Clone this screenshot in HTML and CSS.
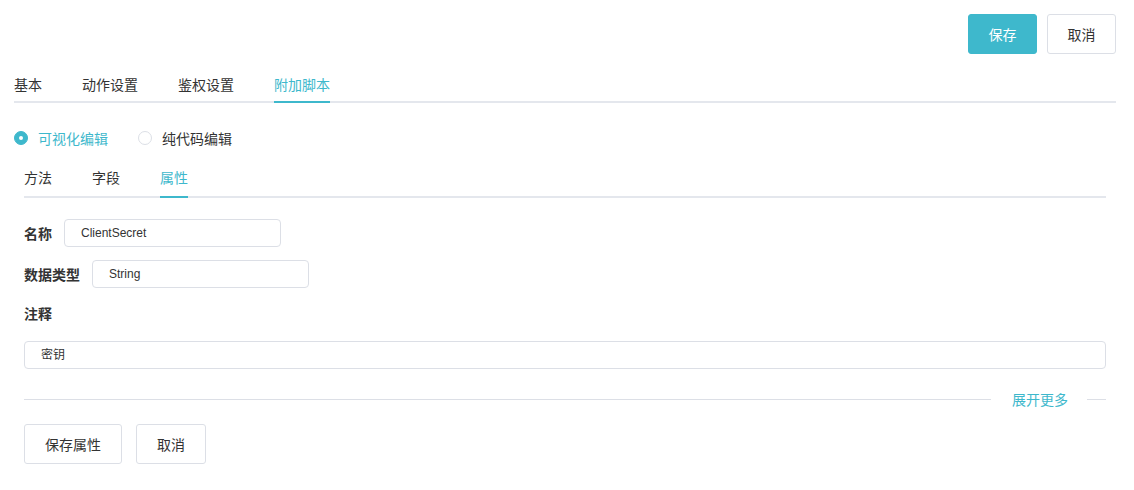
FILE: index.html
```html
<!DOCTYPE html>
<html lang="zh">
<head>
<meta charset="utf-8">
<link rel="stylesheet" href="styles.css">
</head>
<body>
<div class="page">
  <div class="topbar">
    <button class="btn btn-primary">保存</button>
    <button class="btn">取消</button>
  </div>
  <div class="tabs">
    <div class="tab">基本</div>
    <div class="tab">动作设置</div>
    <div class="tab">鉴权设置</div>
    <div class="tab active">附加脚本</div>
  </div>
  <div class="content">
    <div class="radios">
      <label class="radio checked"><span class="dot"></span>可视化编辑</label>
      <label class="radio"><span class="dot"></span>纯代码编辑</label>
    </div>
    <div class="subtabs">
      <div class="subtab">方法</div>
      <div class="subtab">字段</div>
      <div class="subtab active">属性</div>
    </div>
    <div class="row r1">
      <span class="label">名称</span>
      <div class="input">ClientSecret</div>
    </div>
    <div class="row r2">
      <span class="label">数据类型</span>
      <div class="input">String</div>
    </div>
    <div class="label block">注释</div>
    <div class="input wide">密钥</div>
    <div class="divider">
      <span class="line"></span>
      <span class="more">展开更多</span>
      <span class="line short"></span>
    </div>
    <div class="actions">
      <button class="btn btn-lg">保存属性</button>
      <button class="btn">取消</button>
    </div>
  </div>
</div>
</body>
</html>
```
FILE: styles.css
```css
* { box-sizing: border-box; }
body {
  margin: 0;
  font-family: "Noto Sans CJK SC", "Liberation Sans", sans-serif;
  color: #333;
  background: #fff;
}
.page { padding: 14px 18px 0 14px; }
.topbar { display: flex; justify-content: flex-end; gap: 10px; }
.btn {
  height: 40px;
  width: 70px;
  border: 1px solid #dcdfe6;
  border-radius: 3px;
  background: #fff;
  color: #333;
  font-family: inherit;
  font-size: 14px;
  padding: 0;
}
.topbar .btn { width: 69px; }
.btn-primary { background: #3eb8cc; border-color: #3eb8cc; color: #fff; }
.btn-lg { width: 98px; }
.tabs {
  display: flex;
  gap: 40px;
  margin-top: 20px;
  border-bottom: 2px solid #e4e7ed;
}
.tab {
  font-size: 14px;
  line-height: 20px;
  padding: 0 0 7px;
  margin-bottom: -2px;
  border-bottom: 2px solid transparent;
}
.tab.active { color: #3eb8cc; border-bottom-color: #3eb8cc; }
.content { padding: 0 10px 0 10px; }
.radios {
  display: flex;
  gap: 30px;
  margin: 25px 0 0 -10px;
}
.radio {
  display: flex;
  align-items: center;
  gap: 10px;
  font-size: 14px;
  line-height: 20px;
}
.dot {
  width: 14px; height: 14px;
  border: 1px solid #dcdfe6;
  border-radius: 50%;
  background: #fff;
  position: relative;
}
.radio.checked { color: #3eb8cc; }
.radio.checked .dot { background: #3eb8cc; border-color: #3eb8cc; }
.radio.checked .dot::after {
  content: "";
  position: absolute;
  left: 4px; top: 4px;
  width: 4px; height: 4px;
  border-radius: 50%;
  background: #fff;
}
.subtabs {
  display: flex;
  gap: 40px;
  margin-top: 19px;
  border-bottom: 2px solid #e4e7ed;
}
.subtab {
  font-size: 14px;
  line-height: 20px;
  padding-bottom: 9px;
  margin-bottom: -2px;
  border-bottom: 2px solid transparent;
}
.subtab.active { color: #3eb8cc; border-bottom-color: #3eb8cc; }
.row { display: flex; align-items: center; gap: 12px; }
.r1 { margin-top: 21px; }
.r2 { margin-top: 13px; }
.label { font-size: 14px; font-weight: bold; line-height: 20px; color: #333; }
.label.block { margin-top: 15px; }
.input {
  width: 217px;
  height: 28px;
  border: 1px solid #dcdfe6;
  border-radius: 4px;
  padding-left: 16px;
  font-size: 12px;
  line-height: 26px;
  font-family: "Liberation Sans", "Noto Sans CJK SC", sans-serif;
  color: #333;
}
.input.wide { width: auto; margin-top: 18px; }
.divider {
  display: flex;
  align-items: center;
  margin-top: 20px;
  height: 20px;
}
.line { flex: 1; height: 1px; background: #dcdfe6; }
.line.short { flex: 0 0 19px; }
.more { color: #3eb8cc; font-size: 14px; line-height: 20px; padding: 0 19px 0 21px; }
.actions { display: flex; gap: 14px; margin-top: 15px; }
```
